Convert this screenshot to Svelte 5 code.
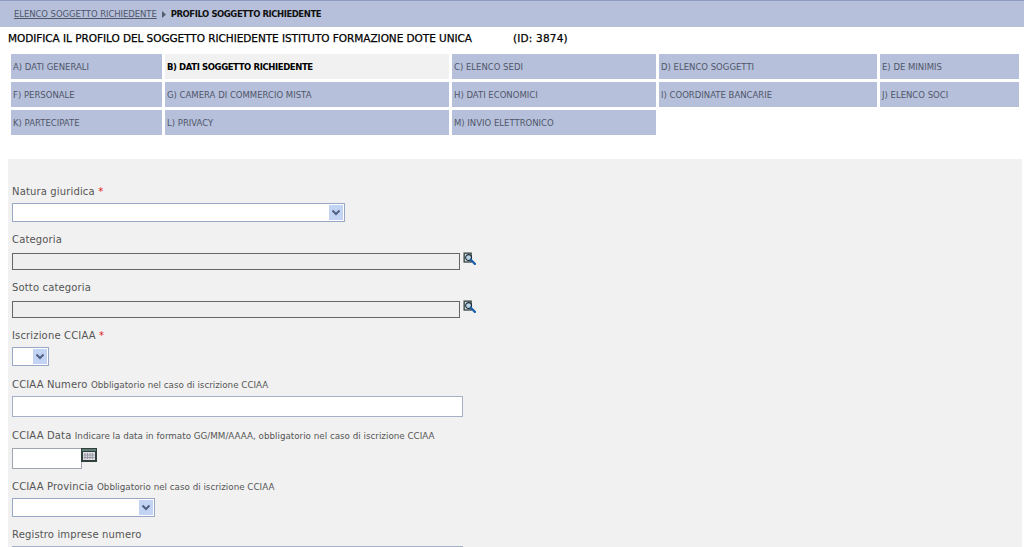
<script>
    const tabs = [
        'A) DATI GENERALI',
        'B) DATI SOGGETTO RICHIEDENTE',
        'C) ELENCO SEDI',
        'D) ELENCO SOGGETTI',
        'E) DE MINIMIS',
        'F) PERSONALE',
        'G) CAMERA DI COMMERCIO MISTA',
        'H) DATI ECONOMICI',
        'I) COORDINATE BANCARIE',
        'J) ELENCO SOCI',
        'K) PARTECIPATE',
        'L) PRIVACY',
        'M) INVIO ELETTRONICO'
    ];
    const activeTab = 'B) DATI SOGGETTO RICHIEDENTE';
</script>

{#snippet lookup()}
    <svg class="icon" width="13" height="13" viewBox="0 0 14 14" aria-hidden="true">
        <path d="M0.5 0.5h9v11h-9z" fill="#3c4a48" />
        <path d="M2 2h6v8H2z" fill="#dfe6e6" />
        <circle cx="6" cy="6" r="3.2" fill="#b9d3e0" stroke="#1c2c3c" stroke-width="1.2" />
        <path d="M8.4 8.4l4.4 4.4" stroke="#1c5fa8" stroke-width="2.4" stroke-linecap="round" />
    </svg>
{/snippet}

<div class="page">
    <nav class="crumbs">
        <a href="#top">ELENCO SOGGETTO RICHIEDENTE</a>
        <svg width="4" height="7" viewBox="0 0 4 7" aria-hidden="true"><path d="M0 0l4 3.5L0 7z" fill="#555c70" /></svg>
        <strong>PROFILO SOGGETTO RICHIEDENTE</strong>
    </nav>

    <h1><span>MODIFICA IL PROFILO DEL SOGGETTO RICHIEDENTE ISTITUTO FORMAZIONE DOTE UNICA</span><span class="id">(ID: 3874)</span></h1>

    <div class="tabs">
        {#each tabs as t}
            <div class="tab" class:active={t === activeTab}>{t}</div>
        {/each}
    </div>

    <form class="panel" on:submit|preventDefault>
        <div class="field">
            <label for="natura">Natura giuridica <em>*</em></label>
            <select id="natura" class="w-natura"><option></option></select>
        </div>
        <div class="field">
            <label for="categoria">Categoria</label>
            <div class="row tall">
                <input id="categoria" class="locked" type="text" readonly />
                {@render lookup()}
            </div>
        </div>
        <div class="field">
            <label for="sotto">Sotto categoria</label>
            <div class="row tall">
                <input id="sotto" class="locked" type="text" readonly />
                {@render lookup()}
            </div>
        </div>
        <div class="field">
            <label for="iscrizione">Iscrizione CCIAA <em>*</em></label>
            <select id="iscrizione" class="w-small"><option></option></select>
        </div>
        <div class="field roomy">
            <label for="numero">CCIAA Numero <small>Obbligatorio nel caso di iscrizione CCIAA</small></label>
            <input id="numero" class="text" type="text" />
        </div>
        <div class="field">
            <label for="data">CCIAA Data <small>Indicare la data in formato GG/MM/AAAA, obbligatorio nel caso di iscrizione CCIAA</small></label>
            <div class="row date-row">
                <input id="data" class="text date" type="text" />
                <svg class="cal" width="16" height="14" viewBox="0 0 16 14" aria-hidden="true">
                    <path d="M0 0h16v14H0z" fill="#2f3f3c" />
                    <path d="M1 1h14v2H1z" fill="#5d7a74" />
                    <path d="M2 4h12v8H2z" fill="#dcdce2" />
                    <path d="M4 5v6M6.500 5v6M9 5v6M11.500 5v6M2.500 7h11M2.500 9.500h11" stroke="#8d8d9c" stroke-width="0.8" />
                </svg>
            </div>
        </div>
        <div class="field">
            <label for="provincia">CCIAA Provincia <small>Obbligatorio nel caso di iscrizione CCIAA</small></label>
            <select id="provincia" class="w-prov"><option></option></select>
        </div>
        <div class="field">
            <label for="registro">Registro imprese numero</label>
            <input id="registro" class="text" type="text" />
        </div>
    </form>
</div>

<style>
    :global(body) {
        background: #fff;
        overflow: hidden;
    }

    .page {
        height: 547px;
        overflow: hidden;
        font-family: "DejaVu Sans", Verdana, sans-serif;
        color: #444;
    }

    .crumbs {
        display: flex;
        align-items: center;
        gap: 5px;
        height: 26px;
        padding-left: 14px;
        border-top: 1px solid #8f9cc2;
        background: #b6c0da;
        font-size: 8.500px;
    }

    .crumbs a {
        color: #50566a;
        text-decoration: underline;
        letter-spacing: -0.08px;
    }

    .crumbs strong {
        color: #111;
        letter-spacing: -0.45px;
    }

    h1 {
        display: flex;
        gap: 41px;
        margin: 0;
        height: 26px;
        padding: 4px 0 0 8px;
        box-sizing: border-box;
        line-height: 14px;
        font-size: 10.500px;
        font-weight: normal;
        letter-spacing: -0.05px;
        color: #000;
        -webkit-text-stroke: 0.25px #000;
    }

    h1 .id {
        letter-spacing: 0.2px;
    }

    .tabs {
        display: grid;
        grid-template-columns: 151px 284px 204px 218px 139px;
        grid-auto-rows: 25px;
        gap: 3px;
        margin: 1px 0 0 11px;
    }

    .tab {
        display: flex;
        align-items: center;
        padding-left: 2px;
        background: #b6c0da;
        color: #50566a;
        font-size: 8.500px;
    }

    .tab.active {
        background: #f1f1f1;
        color: #000;
        font-weight: bold;
        letter-spacing: -0.4px;
    }

    .panel {
        margin: 24px 2px 0 8px;
        padding: 25px 0 0 4px;
        background: #f1f1f1;
    }

    .field {
        margin-bottom: 10px;
    }

    .field.roomy {
        margin-top: 11px;
        margin-bottom: 11px;
    }

    label {
        display: block;
        height: 14px;
        margin-bottom: 5px;
        line-height: 16px;
        font-size: 10px;
        letter-spacing: 0.15px;
        color: #555;
    }

    label em {
        font-style: normal;
        color: #e02020;
    }

    label small {
        font-size: 8.750px;
        letter-spacing: 0;
        color: #555;
    }

    .row {
        display: flex;
        align-items: flex-start;
    }

    .row.tall {
        margin-top: 7px;
    }

    .row.date-row {
        margin-top: 6px;
    }

    input,
    select {
        display: block;
        box-sizing: border-box;
        margin: 0;
        padding: 0 2px;
        border-radius: 0;
        background-color: #fff;
        font: inherit;
        outline: none;
    }

    select {
        height: 19px;
        border: 1px solid #98a8c4;
        -webkit-appearance: none;
        appearance: none;
        background-image: url("data:image/svg+xml,%3Csvg xmlns='http://www.w3.org/2000/svg' width='14' height='15' viewBox='0 0 14 15'%3E%3Crect width='14' height='15' fill='%23c3d3f3'/%3E%3Cpath d='M3.500 5.500l3.500 3.500 3.500-3.500' fill='none' stroke='%234d6185' stroke-width='2'/%3E%3C/svg%3E");
        background-repeat: no-repeat;
        background-position: right 1px center;
    }

    .w-natura {
        width: 333px;
    }

    .w-small {
        width: 37px;
    }

    .w-prov {
        width: 143px;
    }

    .locked {
        width: 448px;
        height: 17px;
        border: 1px solid #666;
        background: #efefef;
    }

    .text {
        width: 451px;
        height: 21px;
        border: 1px solid #a4b0c6;
    }

    .text.date {
        width: 70px;
        border-color: #a0a6b0;
    }

    .icon {
        margin: -1px 0 0 3px;
    }

    .cal {
        margin-left: -1px;
    }
</style>
